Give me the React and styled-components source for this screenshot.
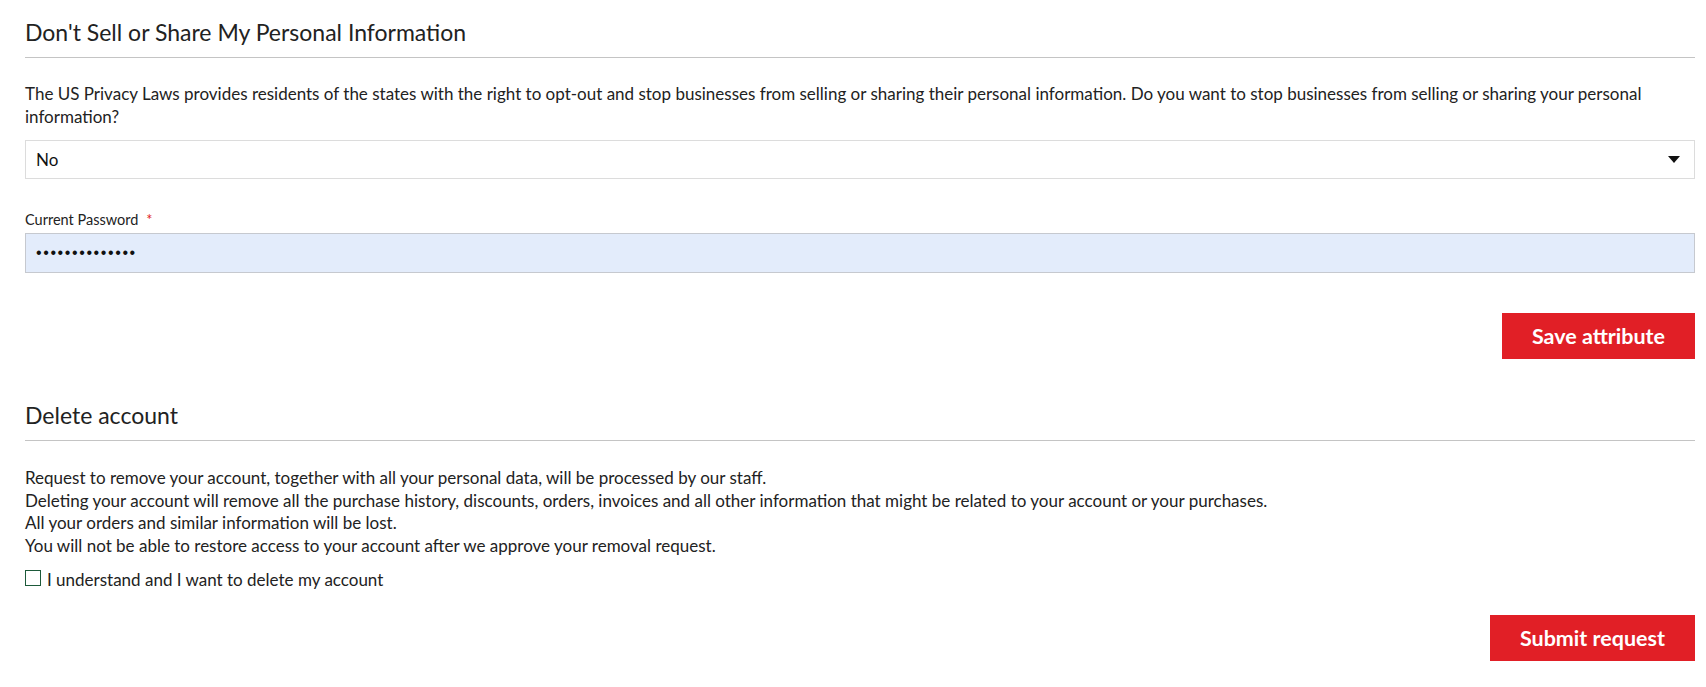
import { useState } from 'react';
import styled, { createGlobalStyle } from 'styled-components';

const GlobalStyle = createGlobalStyle`
  body {
    margin: 0;
    background: #ffffff;
    font-family: Lato, "Liberation Sans", sans-serif;
    color: #222222;
  }
`;

const Page = styled.div`
  padding: 19px 11px 20px 25px;
  display: flex;
  flex-direction: column;
`;

const Section = styled.section`
  display: flex;
  flex-direction: column;
  margin-top: ${(p) => p.$top || '0'};
`;

const Heading = styled.h2`
  margin: 0;
  font-size: 23px;
  font-weight: 400;
  line-height: 26px;
  color: #222222;
  padding-bottom: 12px;
  border-bottom: 1px solid #c4c4c4;
`;

const Text = styled.p`
  margin: 24px 0 0;
  font-size: 17px;
  line-height: 23px;
  color: #222222;
`;

const SelectWrap = styled.div`
  position: relative;
  margin-top: 12px;
`;

const Select = styled.select`
  appearance: none;
  width: 100%;
  height: 39px;
  border: 1px solid #dcdcdc;
  background: #ffffff;
  padding: 0 10px;
  font-family: Lato, "Liberation Sans", sans-serif;
  font-size: 17px;
  color: #111111;
  outline: none;
`;

const Arrow = styled.span`
  position: absolute;
  right: 15px;
  top: 16px;
  width: 0;
  height: 0;
  border-left: 6px solid transparent;
  border-right: 6px solid transparent;
  border-top: 7px solid #111111;
  pointer-events: none;
`;

const Label = styled.label`
  margin-top: 33px;
  font-size: 14.5px;
  line-height: 16px;
  color: #222222;
`;

const Required = styled.span`
  color: #e11f26;
  margin-left: 8px;
`;

const Input = styled.input`
  margin-top: 5px;
  height: 40px;
  box-sizing: border-box;
  width: 100%;
  border: 1px solid #c6c9cf;
  background: #e3ecfb;
  padding: 0 10px;
  font-size: 16px;
  letter-spacing: 1.6px;
  color: #111111;
  outline: none;
`;

const Actions = styled.div`
  display: flex;
  justify-content: flex-end;
  margin-top: ${(p) => p.$top};
`;

const Button = styled.button`
  height: 46px;
  padding: 0 30px;
  border: none;
  background: #e11f26;
  color: #ffffff;
  font-family: Lato, "Liberation Sans", sans-serif;
  font-weight: 700;
  font-size: 21.5px;
  cursor: pointer;
`;

const Lines = styled.div`
  margin-top: 26px;
  font-size: 17px;
  line-height: 22.7px;
`;

const CheckRow = styled.label`
  display: flex;
  align-items: center;
  gap: 6px;
  margin-top: 11px;
  font-size: 17px;
  line-height: 22px;
  cursor: pointer;
`;

const Box = styled.span`
  width: 14px;
  height: 14px;
  border: 1px solid #1d5a3a;
  flex: none;
  margin-top: -3px;
  display: flex;
  align-items: center;
  justify-content: center;
  font-size: 12px;
  color: #1d5a3a;
`;

export default function App() {
  const [agree, setAgree] = useState(false);

  return (
    <>
      <GlobalStyle />
      <Page>
        <Section>
          <Heading>Don't Sell or Share My Personal Information</Heading>
          <Text>
            The US Privacy Laws provides residents of the states with the right to opt-out and stop
            businesses from selling or sharing their personal information. Do you want to stop
            businesses from selling or sharing your personal information?
          </Text>
          <SelectWrap>
            <Select defaultValue="no">
              <option value="no">No</option>
              <option value="yes">Yes</option>
            </Select>
            <Arrow />
          </SelectWrap>
          <Label htmlFor="current-password">
            Current Password<Required>*</Required>
          </Label>
          <Input id="current-password" type="password" defaultValue="passwordpasswd" />
          <Actions $top="40px">
            <Button>Save attribute</Button>
          </Actions>
        </Section>

        <Section $top="43px">
          <Heading>Delete account</Heading>
          <Lines>
            <div>Request to remove your account, together with all your personal data, will be processed by our staff.</div>
            <div>
              Deleting your account will remove all the purchase history, discounts, orders, invoices and all other
              information that might be related to your account or your purchases.
            </div>
            <div>All your orders and similar information will be lost.</div>
            <div>You will not be able to restore access to your account after we approve your removal request.</div>
          </Lines>
          <CheckRow onClick={() => setAgree(!agree)}>
            <Box>{agree ? '✓' : ''}</Box>
            I understand and I want to delete my account
          </CheckRow>
          <Actions $top="24px">
            <Button>Submit request</Button>
          </Actions>
        </Section>
      </Page>
    </>
  );
}
